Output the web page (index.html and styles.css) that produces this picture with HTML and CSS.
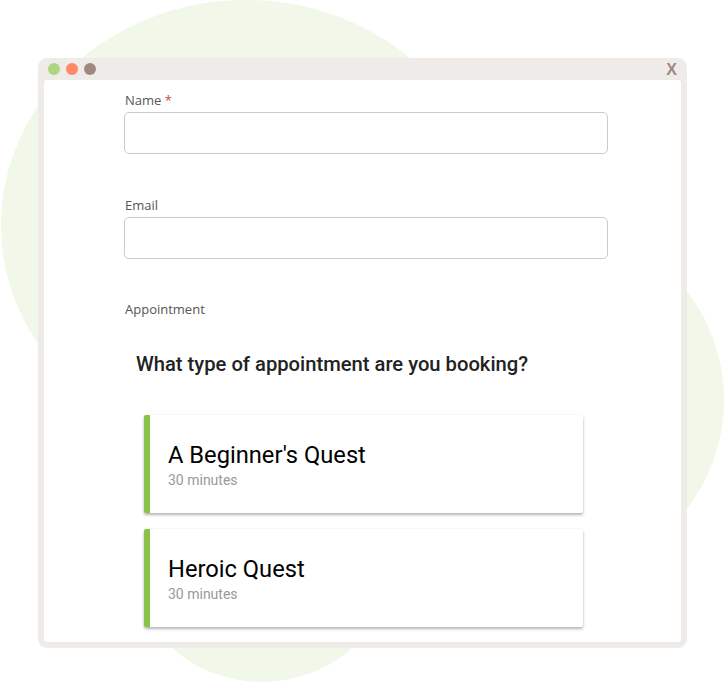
FILE: index.html
```html
<!DOCTYPE html>
<html lang="en">
<head>
<meta charset="utf-8">
<title>Booking form</title>
<link rel="stylesheet" href="styles.css">
</head>
<body>
<div class="stage">
  <div class="blob blob-top"></div>
  <div class="blob blob-right"></div>
  <div class="blob blob-bottom"></div>
  <div class="window">
    <div class="titlebar">
      <div class="dots">
        <span class="dot dot-green"></span>
        <span class="dot dot-orange"></span>
        <span class="dot dot-brown"></span>
      </div>
      <span class="close">X</span>
    </div>
    <div class="content">
      <form class="form">
        <div class="field">
          <label class="label">Name <span class="req">*</span></label>
          <div class="input"></div>
        </div>
        <div class="field field-email">
          <label class="label">Email</label>
          <div class="input"></div>
        </div>
        <div class="field field-appt">
          <label class="label">Appointment</label>
        </div>
        <h2 class="question">What type of appointment are you booking?</h2>
        <div class="cards">
          <div class="card">
            <div class="card-title">A Beginner's Quest</div>
            <div class="card-sub">30 minutes</div>
          </div>
          <div class="card">
            <div class="card-title">Heroic Quest</div>
            <div class="card-sub">30 minutes</div>
          </div>
        </div>
      </form>
    </div>
  </div>
</div>
</body>
</html>
```

FILE: styles.css
```css
html, body {
  margin: 0;
  padding: 0;
  background: #ffffff;
}

.stage {
  position: relative;
  width: 726px;
  height: 684px;
  overflow: hidden;
  padding: 58px 39px 36px 38px;
  box-sizing: border-box;
}

.blob {
  position: absolute;
  background: #f1f7e9;
  border-radius: 50%;
  z-index: 0;
}

.blob-top {
  left: 1px;
  top: 0;
  width: 490px;
  height: 450px;
}

.blob-right {
  left: 368px;
  top: 222px;
  width: 356px;
  height: 356px;
}

.blob-bottom {
  left: 125px;
  top: 408px;
  width: 274px;
  height: 274px;
}

.window {
  position: relative;
  z-index: 1;
  height: 590px;
  background: #efebe9;
  border-radius: 9px;
  padding: 0 6px 6px 6px;
  box-sizing: border-box;
  display: flex;
  flex-direction: column;
}

.titlebar {
  height: 22px;
  display: flex;
  align-items: center;
  justify-content: space-between;
  padding: 0 4px 0 4px;
  flex: none;
}

.dots {
  display: flex;
  gap: 6px;
}

.dot {
  width: 12px;
  height: 12px;
  border-radius: 50%;
  display: block;
}

.dot-green { background: #aed581; }
.dot-orange { background: #ff8a65; }
.dot-brown { background: #a1887f; }

.close {
  font-family: "Liberation Sans", Arial, sans-serif;
  font-weight: bold;
  font-size: 16px;
  line-height: 16px;
  color: #a1887f;
  margin-top: 2px;
}

.content {
  flex: 1;
  background: #ffffff;
  border-radius: 3px;
  overflow: hidden;
  padding: 11px 0 0 80px;
}

.form {
  width: 484px;
  display: flex;
  flex-direction: column;
}

.field {
  display: flex;
  flex-direction: column;
}

.field-email {
  margin-top: 42px;
}

.field-appt {
  margin-top: 41px;
}

.label {
  font-family: "Open Sans", "Noto Sans", sans-serif;
  font-size: 13px;
  line-height: 18px;
  color: #555555;
  padding-left: 1px;
  margin-bottom: 3px;
}

.req {
  color: #b94a48;
}

.input {
  height: 42px;
  border: 1px solid #cccccc;
  border-radius: 5px;
  box-sizing: border-box;
  background: #ffffff;
}

.question {
  font-family: Roboto, "Liberation Sans", sans-serif;
  font-weight: 500;
  font-size: 20.2px;
  line-height: 26px;
  color: #222222;
  margin: 30px 0 0 12px;
}

.cards {
  display: flex;
  flex-direction: column;
  gap: 16px;
  margin: 38px 0 0 20px;
  width: 439px;
}

.card {
  height: 98px;
  box-sizing: border-box;
  background: #ffffff;
  border-left: 6px solid #8bc34a;
  border-radius: 2px;
  box-shadow: 0 2px 3px rgba(0, 0, 0, 0.28), 0 0 2px rgba(0, 0, 0, 0.08);
  padding: 25px 0 0 18px;
  font-family: Roboto, "Liberation Sans", sans-serif;
}

.card-title {
  font-size: 23.7px;
  line-height: 30px;
  color: #000000;
}

.card-sub {
  font-size: 14px;
  line-height: 20px;
  color: #999999;
}
```
